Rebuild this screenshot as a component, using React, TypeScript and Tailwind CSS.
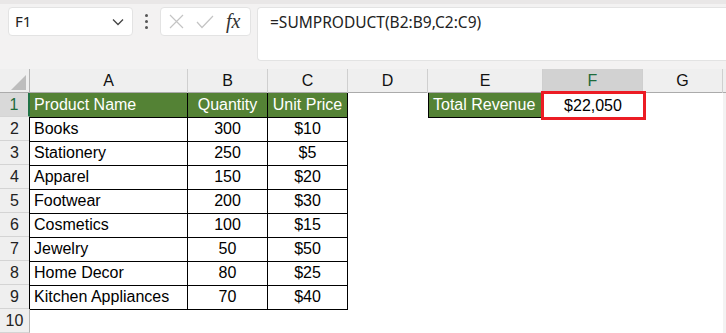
import React from "react";

const rows: [string, string, string][] = [
  ["Books", "300", "$10"],
  ["Stationery", "250", "$5"],
  ["Apparel", "150", "$20"],
  ["Footwear", "200", "$30"],
  ["Cosmetics", "100", "$15"],
  ["Jewelry", "50", "$50"],
  ["Home Decor", "80", "$25"],
  ["Kitchen Appliances", "70", "$40"],
];

const cols = ["A", "B", "C", "D", "E", "F", "G"];
const gridCols = "grid grid-cols-[30px_158px_80px_80px_80px_115px_100px_80px_1fr]";

function RowHead({ n, sel }: { n: number; sel?: boolean }) {
  return (
    <div
      className={
        "h-[24px] flex items-center justify-center border-b border-[#d4d4d4] text-[16px] " +
        (sel
          ? "bg-[#d9d9d9] text-[#1e6b3c] border-r-2 border-r-[#217346]"
          : "bg-[#efefef] text-[#222] border-r border-r-[#b4b4b4]")
      }
    >
      {n}
    </div>
  );
}

export default function App() {
  return (
    <div
      className="w-[726px] h-[333px] overflow-hidden bg-[#f3f2f2] text-[16px]"
      style={{ fontFamily: '"Liberation Sans", Arial, sans-serif' }}
    >
      {/* Toolbar */}
      <div className="h-[69px] border-t-[4px] border-[#e9e7e7] pt-[3px] flex items-start bg-[#f3f2f2]">
        <div className="ml-[8px] w-[125px] h-[29px] bg-white rounded-[4px] border border-[#e3e3e3] flex items-center justify-between pl-[6px] pr-[8px]">
          <span style={{ fontFamily: '"Noto Sans", sans-serif' }} className="text-[15px] text-[#222]">F1</span>
          <svg width="12" height="8" viewBox="0 0 12 8">
            <path d="M1 1.5 L6 6.5 L11 1.5" fill="none" stroke="#444" strokeWidth="1.3" />
          </svg>
        </div>
        <div className="w-[27px] h-[29px] flex flex-col items-center justify-center gap-[3px]">
          <span className="w-[3px] h-[3px] bg-[#555] rounded-full" />
          <span className="w-[3px] h-[3px] bg-[#555] rounded-full" />
          <span className="w-[3px] h-[3px] bg-[#555] rounded-full" />
        </div>
        <div className="w-[91px] h-[29px] bg-white rounded-[4px] border border-[#e3e3e3] flex items-center pl-[8px] gap-[12px]">
          <svg width="15" height="15" viewBox="0 0 15 15">
            <path d="M1 1 L14 14 M14 1 L1 14" stroke="#c4c4c4" strokeWidth="1.2" fill="none" />
          </svg>
          <svg width="18" height="14" viewBox="0 0 18 14">
            <path d="M1 7 L6 12.5 L17 1" stroke="#c4c4c4" strokeWidth="1.2" fill="none" />
          </svg>
          <span
            className="text-[20px] italic text-[#333] leading-none -mt-[2px]"
            style={{ fontFamily: '"Liberation Serif", "Times New Roman", serif' }}
          >
            fx
          </span>
        </div>
        <div className="ml-[6px] flex-1 h-[54px] bg-white rounded-l-[4px] border border-r-0 border-[#e3e3e3] pl-[12px] pt-[3px]">
          <span style={{ fontFamily: '"Noto Sans", sans-serif' }} className="text-[15.5px] text-[#222]">
            =SUMPRODUCT(B2:B9,C2:C9)
          </span>
        </div>
      </div>

      {/* Column headers */}
      <div className={gridCols + " h-[24px] bg-[#efefef] border-b border-[#ababab] text-[16px]"}>
        <div className="relative border-r border-[#b4b4b4]">
          <div className="absolute right-[3px] bottom-[3px] w-0 h-0 border-l-[15px] border-l-transparent border-b-[15px] border-b-[#bdbdbd]" />
        </div>
        {cols.map((c) => (
          <div
            key={c}
            className={
              "flex items-center justify-center border-r border-[#cfcfcf] " +
              (c === "F" ? "bg-[#d2d2d2] text-[#1e6b3c]" : "text-[#111]")
            }
          >
            {c}
          </div>
        ))}
        <div />
      </div>

      {/* Row 1 */}
      <div className={gridCols + " h-[24px] bg-white"}>
        <RowHead n={1} sel />
        <div className="bg-[#548235] text-white flex items-center pl-[4px] border-r border-b border-black">Product Name</div>
        <div className="bg-[#548235] text-white flex items-center justify-center border-r border-b border-black">Quantity</div>
        <div className="bg-[#548235] text-white flex items-center justify-center border-r border-b border-black">Unit Price</div>
        <div />
        <div className="bg-[#548235] text-white flex items-center pl-[4px] border border-black border-t-0">Total Revenue</div>
        <div className="relative flex items-center justify-center text-black">
          <div className="absolute -left-[2px] -right-[3px] -top-[2px] -bottom-[2px] border-[3px] border-[#ec1c24]" />
          <span className="relative">$22,050</span>
        </div>
        <div />
        <div className="bg-[#f3f2f2]" />
      </div>

      {rows.map((r, i) => (
        <div key={i} className={gridCols + " h-[24px] bg-white text-black"}>
          <RowHead n={i + 2} />
          <div className="flex items-center pl-[4px] border-l border-r border-b border-black -ml-px">{r[0]}</div>
          <div className="flex items-center justify-center border-r border-b border-black">{r[1]}</div>
          <div className="flex items-center justify-center border-r border-b border-black">{r[2]}</div>
          <div />
          <div />
          <div />
          <div />
          <div className="bg-[#f3f2f2]" />
        </div>
      ))}

      <div className={gridCols + " h-[24px] bg-white"}>
        <RowHead n={10} />
        <div />
        <div />
        <div />
        <div />
        <div />
        <div />
        <div />
        <div className="bg-[#f3f2f2]" />
      </div>
    </div>
  );
}
